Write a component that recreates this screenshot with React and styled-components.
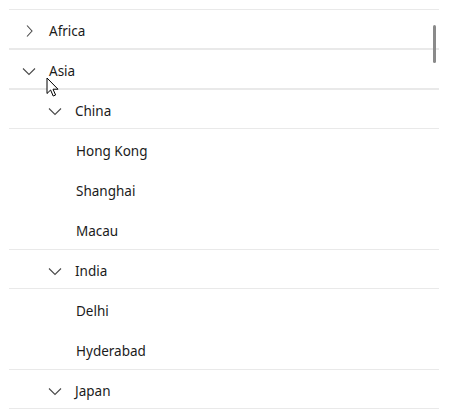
import React from 'react';
import styled, { createGlobalStyle } from 'styled-components';

const Global = createGlobalStyle`
  html, body {
    margin: 0;
    padding: 0;
    background: #ffffff;
  }
  body {
    font-family: "Noto Sans", "Open Sans", sans-serif;
  }
`;

const Page = styled.div`
  width: 452px;
  height: 411px;
  overflow: hidden;
  padding: 9px 0 0 9px;
  box-sizing: border-box;
`;

const Tree = styled.div`
  position: relative;
  width: 430px;
  display: flex;
  flex-direction: column;
`;

const Row = styled.div`
  box-sizing: border-box;
  display: flex;
  align-items: center;
  gap: 12px;
  height: 40px;
  padding-top: 4px;
  padding-left: ${(p) => p.$indent}px;
  border-top: ${(p) => (p.$group ? '1px solid #e9e9e9' : 'none')};
  border-bottom: ${(p) => (p.$group ? '1px solid #e9e9e9' : 'none')};
  font-size: 13.5px;
  color: #1b1b1b;
`;

const Chevron = styled.svg`
  width: 16px;
  height: 16px;
  flex: none;
  color: #4a4a4a;
`;

const Label = styled.span`
  line-height: 20px;
`;

const ScrollThumb = styled.div`
  position: absolute;
  left: 424px;
  top: 16px;
  width: 3px;
  height: 38px;
  border-radius: 2px;
  background: #8a8a8a;
`;

const Pointer = styled.svg`
  position: absolute;
  left: 37px;
  top: 68px;
  width: 14px;
  height: 21px;
`;

const rows = [
  { label: 'Africa', level: 1, state: 'closed' },
  { label: 'Asia', level: 1, state: 'open' },
  { label: 'China', level: 2, state: 'open' },
  { label: 'Hong Kong', level: 3 },
  { label: 'Shanghai', level: 3 },
  { label: 'Macau', level: 3 },
  { label: 'India', level: 2, state: 'open' },
  { label: 'Delhi', level: 3 },
  { label: 'Hyderabad', level: 3 },
  { label: 'Japan', level: 2, state: 'open' },
];

const indents = { 1: 12, 2: 38, 3: 67 };

const Arrow = ({ open }) => (
  <Chevron viewBox="0 0 16 16" fill="none" stroke="currentColor" strokeWidth="1.1">
    {open ? <path d="M2 5.5 L8 11.5 L14 5.5" /> : <path d="M6 2.5 L11 8 L6 13.5" />}
  </Chevron>
);

const App = () => {
  return (
    <Page>
      <Global />
      <Tree>
        {rows.map((r) => (
          <Row key={r.label} $group={!!r.state} $indent={indents[r.level]}>
            {r.state && <Arrow open={r.state === 'open'} />}
            <Label>{r.label}</Label>
          </Row>
        ))}
        <ScrollThumb />
        <Pointer viewBox="0 0 14 21">
          <path
            d="M1 1 L1 16.5 L4.6 13 L7.2 19 L9.6 18 L7 12.2 L12 12.2 Z"
            fill="#ffffff"
            stroke="#000000"
            strokeWidth="1"
            strokeLinejoin="miter"
          />
        </Pointer>
      </Tree>
    </Page>
  );
};

export default App;
